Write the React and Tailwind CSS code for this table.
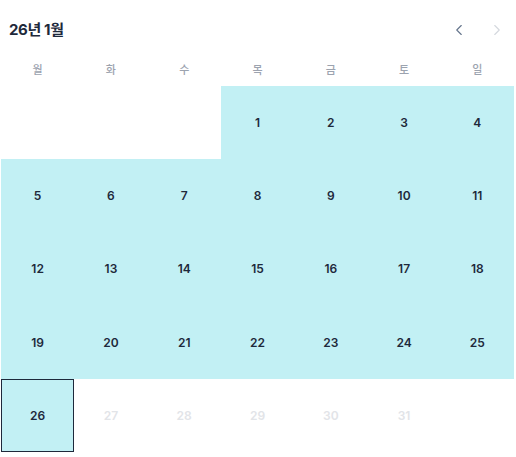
import { ChevronLeft, ChevronRight } from "lucide-react";

const WEEKDAYS = ["월", "화", "수", "목", "금", "토", "일"];
const SELECTED_END = 26;

const cells = [
  ...Array(3).fill(null),
  ...Array.from({ length: 31 }, (_, i) => i + 1),
  null,
];

const App = () => {
  return (
    <div
      className="w-[516px] h-[457px] bg-white text-[#1e293b]"
      style={{ fontFamily: "Inter, 'Noto Sans CJK KR', sans-serif" }}
    >
      <div className="w-[514px] pl-[1px]">
        <header className="h-[60px] flex items-center justify-between pl-[8px] pr-[8px]">
          <h2 className="text-[15px] font-bold tracking-tight">26년 1월</h2>
          <div className="flex items-center gap-[20px]">
            <ChevronLeft className="w-[18px] h-[18px] text-[#64748b]" strokeWidth={1.5} />
            <ChevronRight className="w-[18px] h-[18px] text-[#d4d8de]" strokeWidth={1.5} />
          </div>
        </header>
        <div className="grid grid-cols-7 h-[20px] mb-[6px]">
          {WEEKDAYS.map((d) => (
            <div key={d} className="flex items-center justify-center text-[11px] font-medium text-[#9ca3af]">
              {d}
            </div>
          ))}
        </div>
        <div className="grid grid-cols-7">
          {cells.map((day, i) => {
            const inRange = day && day <= SELECTED_END;
            const isEnd = day === SELECTED_END;
            return (
              <div
                key={i}
                className={`h-[73.3px] flex items-center justify-center text-[12px] font-semibold ${
                  inRange ? "bg-[#c2f0f4]" : ""
                } ${isEnd ? "border border-[#1e293b]" : ""} ${
                  day && !inRange ? "text-[#e2e4e8]" : ""
                }`}
              >
                {day}
              </div>
            );
          })}
        </div>
      </div>
    </div>
  );
};

export default App;
